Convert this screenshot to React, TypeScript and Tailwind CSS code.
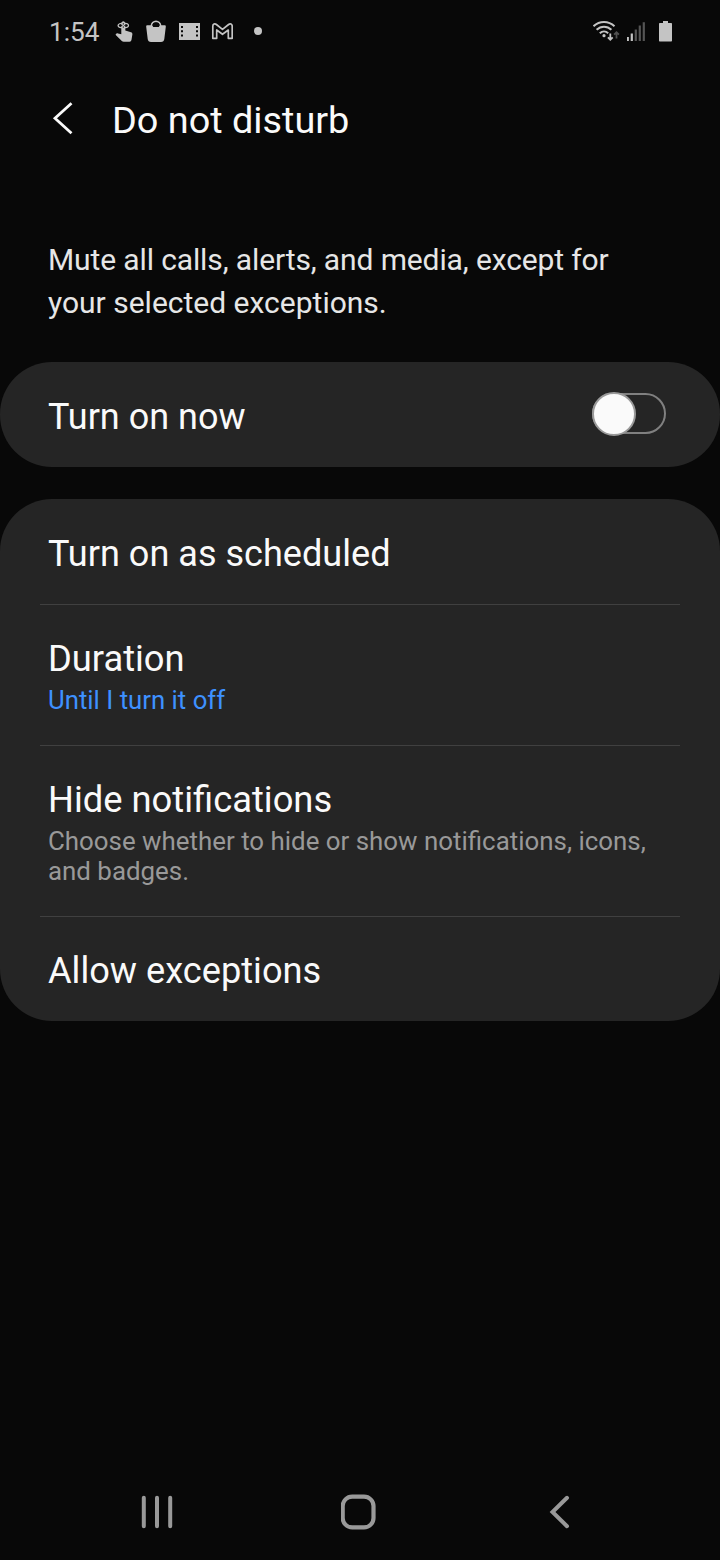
import { useState } from 'react';

interface SettingRowProps {
  title: string;
  titleClass: string;
  summary?: string;
  summaryClass?: string;
}

const rows: SettingRowProps[] = [
  { title: 'Turn on as scheduled', titleClass: 'mt-px -mb-px text-[36.1px]' },
  {
    title: 'Duration',
    titleClass: 'text-[36.3px]',
    summary: 'Until I turn it off',
    summaryClass: 'text-[25.75px] text-[#3e91ff]',
  },
  {
    title: 'Hide notifications',
    titleClass: 'text-[36.35px]',
    summary: 'Choose whether to hide or show notifications, icons, and badges.',
    summaryClass: 'text-[25.88px] text-[#999999]',
  },
  { title: 'Allow exceptions', titleClass: '-mb-px text-[36.2px]' },
];

function TouchIcon() {
  return (
    <svg className="w-5 h-6" viewBox="0 0 20 24" fill="none">
      <ellipse cx="8.300" cy="5.500" rx="5.200" ry="2.300" stroke="#c4c4c4" strokeWidth="1.300" />
      <path
        d="M6.300 3.700C6.300 2.300 7.200 1.300 8.300 1.300s2 1 2 2.400V10.500l5.700 1.700c1 .4 1.500 1.100 1.400 2.100l-.9 5.500c-.2 1.300-.9 1.900-2 1.900H8.700c-.8 0-1.400-.3-1.900-.8L.5 14.700l.8-.9c.5-.5 1-.6 1.700-.4l3.300.9z"
        fill="#c4c4c4"
      />
      <path d="M8.300 3v1.700M8.300 6.300v1.500M6 5.500h1.300M9.300 5.500h1.300" stroke="#0a0a0a" strokeWidth="0.8" />
    </svg>
  );
}

function BagIcon() {
  return (
    <svg className="w-5 h-6" viewBox="0 0 20 24" fill="none">
      <path d="M5.500 8V5.700a4.500 4.300 0 0 1 9 0V8" stroke="#c4c4c4" strokeWidth="1.800" />
      <path
        d="M1.600 5.300h16.800c1 0 1.500.5 1.400 1.400l-1.500 12.300c-.2 1.900-1.400 3-3.300 3H5c-1.900 0-3.100-1.100-3.300-3L.2 6.700C.1 5.800.6 5.300 1.600 5.300z"
        fill="#c4c4c4"
      />
      <path d="M6.400 5.600a3.600 3 0 0 1 7.200 0l-.8 1.500H7.200z" fill="#080808" />
    </svg>
  );
}

function FilmIcon() {
  return (
    <svg className="w-[21px] h-6" viewBox="0 0 21 24">
      <path d="M0 3h21v17H0z" fill="#c4c4c4" />
      <path
        d="M2 6h2v2H2zM2 10.200h2v2H2zM2 14.400h2v2H2zM17 6h2v2h-2zM17 10.200h2v2h-2zM17 14.400h2v2h-2z"
        fill="#080808"
      />
    </svg>
  );
}

function MailIcon() {
  return (
    <svg className="w-[22px] h-6" viewBox="0 0 22 24" fill="none">
      <path
        d="M1.800 18.300V6.200c0-2.200 2-3 3.600-1.700l6.100 4.900 6.100-4.900c1.600-1.300 3.600-.5 3.600 1.700v12.100h-3.900V10l-5.800 4.300L5.700 10v8.300z"
        stroke="#c4c4c4"
        strokeWidth="1.700"
        strokeLinejoin="round"
      />
    </svg>
  );
}

function WifiIcon() {
  return (
    <svg className="w-7 h-6" viewBox="0 0 28 24" fill="none">
      <g stroke="#c4c4c4" strokeWidth="2">
        <path d="M.5 6.200C6.500.5 15.500.5 21.500 6.200" />
        <path d="M3.600 9.800c4.300-4.100 10.500-4.100 14.800 0" />
        <path d="M6.800 13.200c2.500-2.300 5.900-2.300 8.400 0" />
      </g>
      <circle cx="11" cy="15.700" r="1.600" fill="#c4c4c4" />
      <path d="M17.300 13.500v6M14.900 17.300l2.400 2.500 2.400-2.500" stroke="#c4c4c4" strokeWidth="1.800" />
      <path d="M23.500 18.500v-6M21.100 14.700l2.400-2.500 2.400 2.500" stroke="#505050" strokeWidth="1.800" />
    </svg>
  );
}

function SignalIcon() {
  return (
    <svg className="w-[19px] h-6" viewBox="0 0 19 24">
      <path d="M-.3 17h2.200v4H-.3zM3.700 13.500h2.200V21H3.700z" fill="#c4c4c4" />
      <path d="M7.700 9.500h2.200V21H7.700zM11.700 5.500h2.200V21h-2.200zM15.700 2.200h2.200V21h-2.200z" fill="#555555" />
    </svg>
  );
}

function BatteryIcon() {
  return (
    <svg className="w-[13px] h-6" viewBox="0 0 13 24">
      <path
        d="M4 1h5v2h3c.6 0 1 .4 1 1v16.500c0 .6-.4 1-1 1H1c-.6 0-1-.4-1-1V4c0-.6.4-1 1-1h3z"
        fill="#c4c4c4"
      />
    </svg>
  );
}

function StatusBar() {
  return (
    <div className="h-16 pt-5 pl-[49px] pr-12 flex items-start justify-between">
      <div className="flex items-center">
        <span className="w-[66px] text-[26.2px] leading-6 text-[#c4c4c4]">1:54</span>
        <TouchIcon />
        <span className="ml-[11px] flex"><BagIcon /></span>
        <span className="ml-[13px] flex"><FilmIcon /></span>
        <span className="ml-[11px] flex"><MailIcon /></span>
        <span className="ml-[21px] -mt-0.5 w-2 h-2 rounded-full bg-[#c4c4c4]" />
      </div>
      <div className="flex items-center">
        <WifiIcon />
        <span className="ml-1.5 flex"><SignalIcon /></span>
        <span className="ml-[13px] flex"><BatteryIcon /></span>
      </div>
    </div>
  );
}

function Toggle() {
  const [enabled, setEnabled] = useState(false);

  return (
    <button
      role="switch"
      aria-checked={enabled}
      aria-label="Turn on now"
      onClick={() => setEnabled(!enabled)}
      className="w-[74px] h-11 -mt-px flex items-center"
    >
      <span
        className={`w-full h-[41px] -mt-px rounded-full border-2 border-[#808080] flex items-center ${enabled ? 'justify-end bg-[#3e91ff]' : ''}`}
      >
        <span className="w-11 h-11 -ml-0.5 shrink-0 rounded-full border-2 border-[#999999] bg-[#fafafa]" />
      </span>
    </button>
  );
}

function SettingRow({ title, titleClass, summary, summaryClass }: SettingRowProps) {
  return (
    <div className="px-2 pt-[33px] pb-[30px]">
      <h2 className={`leading-[42px] text-[#fafafa] ${titleClass}`}>{title}</h2>
      {summary && <p className={`mt-[5px] leading-[30px] ${summaryClass}`}>{summary}</p>}
    </div>
  );
}

function NavigationBar() {
  return (
    <div className="h-24 px-[140px] flex items-center justify-between">
      <svg className="w-[34px] h-9" viewBox="0 0 34 36" stroke="#999999" strokeWidth="4" strokeLinecap="round">
        <path d="M3.800 3.800v28.400M17 3.800v28.400M30.200 3.800v28.400" />
      </svg>
      <svg className="w-9 h-9" viewBox="0 0 36 36" fill="none" stroke="#999999" strokeWidth="4.200">
        <rect x="1.700" y="2.600" width="30.800" height="30.800" rx="9.500" />
      </svg>
      <svg className="w-9 h-9" viewBox="0 0 36 36" fill="none" stroke="#999999" strokeWidth="4" strokeLinecap="round">
        <path d="M23 3.800 8.500 18 23 32.200" />
      </svg>
    </div>
  );
}

export default function App() {
  return (
    <div className="w-[720px] h-[1560px] flex flex-col bg-[#080808] font-['Roboto',sans-serif]">
      <StatusBar />

      {/* Header */}
      <header className="h-[110px] pl-[52px] flex items-center">
        <svg className="w-6 h-9" viewBox="0 0 24 36" fill="none" stroke="#fafafa" strokeWidth="2.800">
          <path d="M19.500 2.300 3 17.300l16.500 15" />
        </svg>
        <h1 className="ml-9 mt-0.5 text-[37.85px] leading-[44px] text-[#fafafa]">Do not disturb</h1>
      </header>

      <p className="mt-16 px-12 text-[30px] leading-[43px] text-[#e6e6e6]">
        <span className="tracking-[-0.12px]">Mute all calls, alerts, and media, except for</span>{' '}
        your selected exceptions.
      </p>

      {/* Settings */}
      <section className="mt-[38px] h-[105px] pl-12 pr-[54px] rounded-[52px] bg-[#252525] flex items-center justify-between">
        <h2 className="mt-1 text-4xl leading-[42px] text-[#fafafa]">Turn on now</h2>
        <Toggle />
      </section>
      <section className="mt-8 px-10 rounded-[52px] bg-[#252525] divide-y divide-[#404040]">
        {rows.map((row) => (
          <SettingRow key={row.title} {...row} />
        ))}
      </section>

      <div className="flex-1" />
      <NavigationBar />
    </div>
  );
}
